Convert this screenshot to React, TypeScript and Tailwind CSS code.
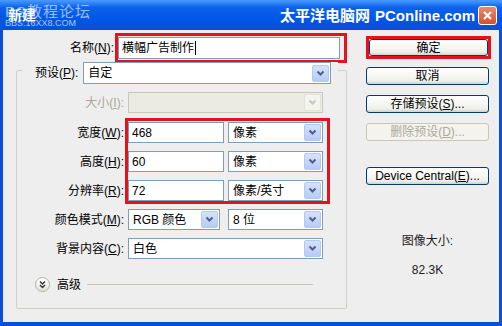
import React from 'react'

const font = "font-['Liberation_Sans','Noto_Sans_CJK_SC',sans-serif]"

function Arrow({ disabled }: { disabled?: boolean }) {
  return (
    <div
      className={
        'flex h-[17px] w-[17px] mr-[1px] items-center justify-center rounded-[2px] border ' +
        (disabled
          ? 'border-[#e3e2dc] bg-[#f3f3ef]'
          : 'border-[#b5c8f2] bg-[linear-gradient(#d6e2fc,#b6cbf7)]')
      }
    >
      <svg width="9" height="7" viewBox="0 0 9 7">
        <path
          d="M1.5 1.5 L4.5 4.5 L7.5 1.5"
          fill="none"
          stroke={disabled ? '#c9c7ba' : '#4d6185'}
          strokeWidth="2"
        />
      </svg>
    </div>
  )
}

function Select({ w, text, disabled, h = 'h-[21px]' }: { w: string; text?: string; disabled?: boolean; h?: string }) {
  return (
    <div
      className={
        `${w} ${h} flex items-center border ` +
        (disabled ? 'border-[#c9c7ba] bg-[#ebebe4]' : 'border-[#7f9db9] bg-white')
      }
    >
      <span className="flex-1 pl-[4px] text-[12px] leading-none text-black whitespace-nowrap">{text}</span>
      <Arrow disabled={disabled} />
    </div>
  )
}

function Input({ w, text }: { w: string; text: string }) {
  return (
    <div className={`${w} h-[21px] flex items-center border border-[#7f9db9] bg-white pl-[3px] text-[12px] leading-none`}>
      {text}
    </div>
  )
}

function Label({ children, disabled }: { children: React.ReactNode; disabled?: boolean }) {
  return (
    <div
      className={
        'w-[108px] h-[21px] flex items-center justify-end pr-[1px] text-[12px] leading-none whitespace-nowrap ' +
        (disabled ? 'text-[#aca899]' : 'text-black')
      }
    >
      {children}
    </div>
  )
}

function Button({ children, disabled, h = 'h-[18px]', w = 'w-[123px]' }: { children: React.ReactNode; disabled?: boolean; h?: string; w?: string }) {
  return (
    <div
      className={
        `${w} ${h} flex items-center justify-center rounded-[3px] border text-[12px] leading-none whitespace-nowrap ` +
        (disabled
          ? 'border-[#c9c7ba] bg-[#f4f3ee] text-[#aca899]'
          : 'border-[#003c74] bg-[linear-gradient(#ffffff,#f0f0ea_80%,#d6d0c5)] text-black')
      }
    >
      {children}
    </div>
  )
}

export default function App() {
  return (
    <div className={`w-[502px] h-[326px] flex flex-col bg-[#0a4fd8] overflow-hidden ${font}`}>
      {/* title bar */}
      <div className="h-[30px] flex items-center bg-[linear-gradient(#4a9bff,#0d62ec_25%,#0057e8_60%,#0a4fd6)]">
        <div className="relative ml-[5px] w-[80px] h-[24px]">
          <div className="absolute left-0 top-[1px] text-[15px] leading-none text-[#d5e4ff] opacity-70 tracking-[1px] whitespace-nowrap">
            PS教程论坛
          </div>
          <div className="absolute left-0 top-[16px] text-[9px] leading-none text-[#bcd3ff] opacity-90 whitespace-nowrap">
            BBS.16XX8.COM
          </div>
          <div className="absolute left-[3px] top-[5px] text-[14px] leading-none font-bold text-white whitespace-nowrap">新建</div>
        </div>
        <div className="ml-auto flex items-center gap-[5px] text-white font-bold">
          <span className="text-[15px] leading-none">太平洋电脑网</span>
          <span className="text-[15px] leading-none font-['Liberation_Sans',sans-serif]">PConline.com</span>
        </div>
        <div className="ml-[3px] mr-[5px] w-[19px] h-[19px] rounded-[3px] border border-white bg-[linear-gradient(#e98a6c,#d6512e)] flex items-center justify-center">
          <svg width="11" height="11" viewBox="0 0 11 11">
            <path d="M2 2 L9 9 M9 2 L2 9" stroke="white" strokeWidth="2.2" />
          </svg>
        </div>
      </div>

      {/* body */}
      <div className="mx-[3px] mb-[4px] flex-1 flex bg-[#eeeeee] pl-[13px]">
        <div className="w-[331px] flex flex-col">
          <div className="mt-[3px] flex items-center">
            <div className="w-[109px] pr-[1px] text-right text-[12px] leading-none">
              名称(<u>N</u>):
            </div>
            <div className="w-[232px] h-[30px] border-[3px] border-[#e4121b] flex items-center pr-[4px]">
              <div className="w-[222px] h-[22px] flex items-center border border-[#7f9db9] bg-white pl-[3px] text-[12px] leading-none">
                横幅广告制作<span className="ml-[1px] w-px h-[14px] bg-black" />
              </div>
            </div>
          </div>

          {/* group box */}
          <div className="mt-[7px] h-[239px] border border-[#cfcfc8] rounded-[2px] flex flex-col">
            <div className="-mt-[9px] ml-[5px] w-fit flex items-center bg-[#eeeeee] pl-[13px] pr-[7px]">
              <span className="text-[12px] leading-none mr-[5px]">
                预设(<u>P</u>):
              </span>
              <Select w="w-[248px]" h="h-[22px]" text="自定" />
            </div>

            <div className="mt-[8px] flex">
              <Label disabled>
                大小(<u>I</u>):
              </Label>
              <div className="pl-[3px]">
                <Select w="w-[195px]" disabled />
              </div>
            </div>

            <div className="mt-[5px] flex">
              <div className="pt-[4px] flex flex-col gap-[8px]">
                <Label>
                  宽度(<u>W</u>):
                </Label>
                <Label>
                  高度(<u>H</u>):
                </Label>
                <Label>
                  分辨率(<u>R</u>):
                </Label>
              </div>
              <div className="w-[205px] h-[86px] border-[3px] border-[#e4121b] pt-[1px] grid grid-cols-[96px_95px] gap-x-[4px] gap-y-[8px] content-start">
                <Input w="w-[96px]" text="468" />
                <Select w="w-[95px]" text="像素" />
                <Input w="w-[96px]" text="60" />
                <Select w="w-[95px]" text="像素" />
                <Input w="w-[96px]" text="72" />
                <Select w="w-[95px]" text="像素/英寸" />
              </div>
            </div>

            <div className="mt-[5px] flex">
              <Label>
                颜色模式(<u>M</u>):
              </Label>
              <div className="pl-[3px] flex gap-[8px]">
                <Select w="w-[92px]" text="RGB 颜色" />
                <Select w="w-[95px]" text="8 位" />
              </div>
            </div>

            <div className="mt-[8px] flex">
              <Label>
                背景内容(<u>C</u>):
              </Label>
              <div className="pl-[3px]">
                <Select w="w-[195px]" text="白色" />
              </div>
            </div>

            <div className="mt-[18px] ml-[18px] mr-[33px] flex items-center">
              <div className="w-[15px] h-[15px] rounded-full border border-[#b0b0a8] bg-[linear-gradient(#ffffff,#e4e4dc)] flex items-center justify-center">
                <svg width="9" height="9" viewBox="0 0 9 9">
                  <path d="M2 1.5 L4.5 4 L7 1.5 M2 5 L4.5 7.5 L7 5" fill="none" stroke="#333" strokeWidth="1.4" />
                </svg>
              </div>
              <span className="ml-[7px] text-[12px] leading-none">高级</span>
              <div className="ml-[6px] flex-1 h-px bg-[#c8c8c0]" />
            </div>
          </div>
        </div>

        {/* right column */}
        <div className="ml-[19px] w-[125px] pt-[6px] flex flex-col">
          <div className="w-[125px] h-[23px] border-[3px] border-[#e4121b] flex">
            <Button w="w-[119px]" h="h-[17px]">
              确定
            </Button>
          </div>
          <div className="mt-[8px]">
            <Button>取消</Button>
          </div>
          <div className="mt-[10px]">
            <Button>
              存储预设(<u>S</u>)...
            </Button>
          </div>
          <div className="mt-[10px]">
            <Button disabled>
              删除预设(<u>D</u>)...
            </Button>
          </div>
          <div className="mt-[26px]">
            <Button>
              Device Central(<u>E</u>)...
            </Button>
          </div>
          <div className="mt-[50px] w-[123px] text-center text-[12px] leading-none text-[#222]">图像大小:</div>
          <div className="mt-[17px] w-[123px] text-center text-[12px] leading-none text-[#222]">82.3K</div>
        </div>
      </div>
    </div>
  )
}
